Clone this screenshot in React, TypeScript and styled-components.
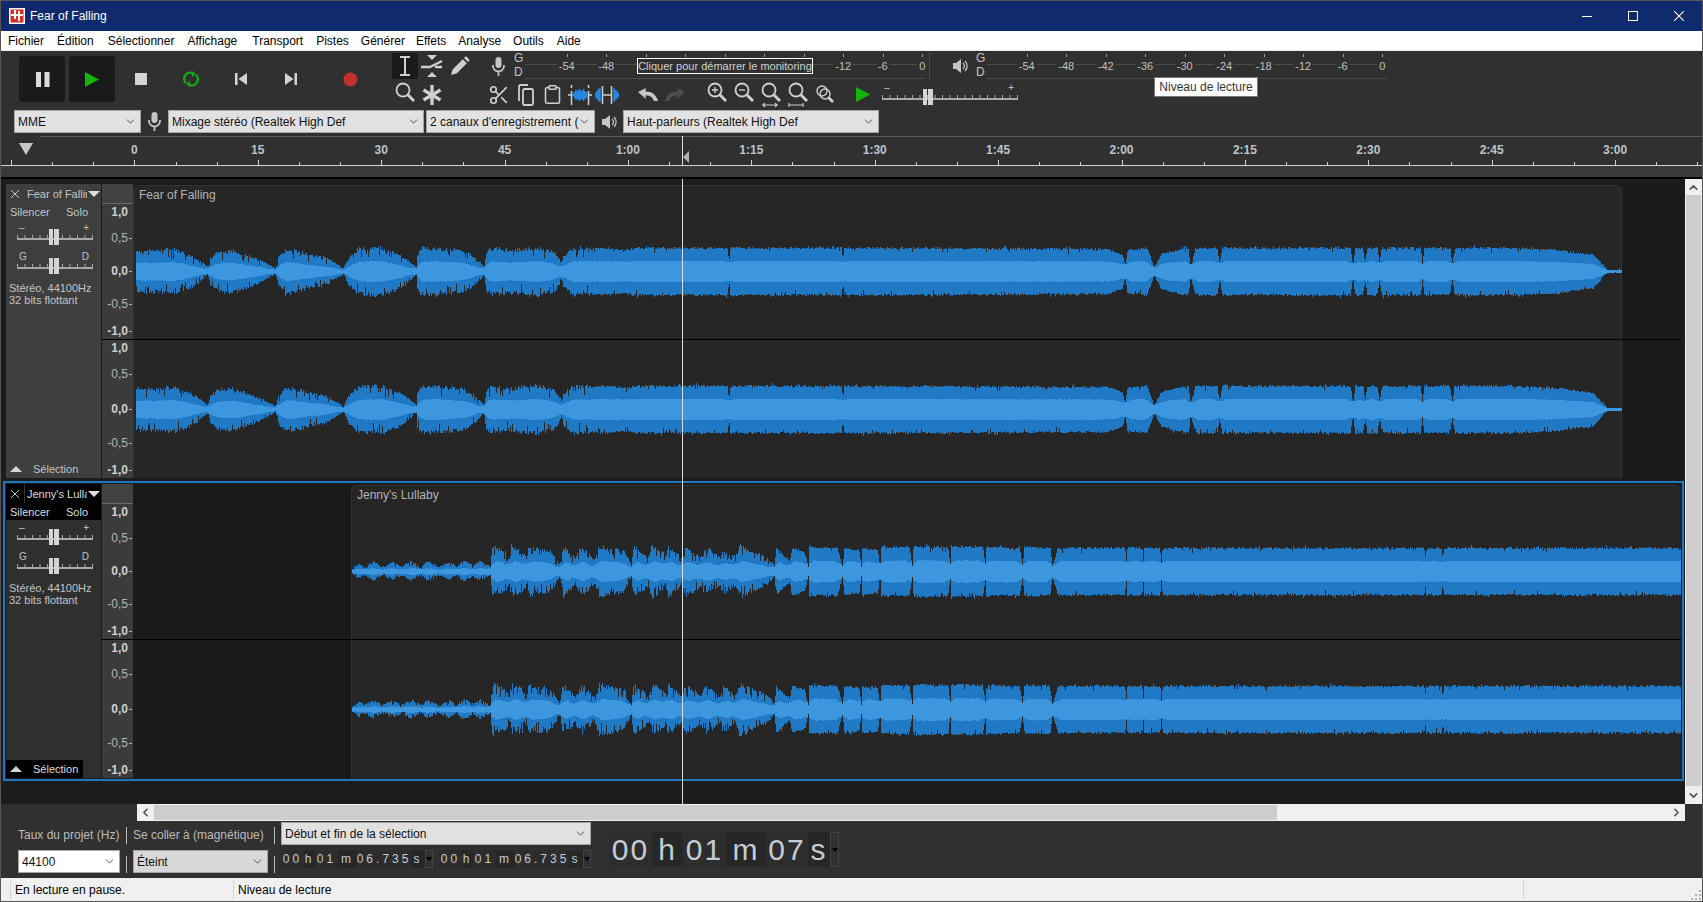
import { FC, ReactNode, useMemo } from "react";
import styled, { createGlobalStyle } from "styled-components";
import { ChevronDown, ChevronLeft, ChevronRight, ChevronUp, Clipboard, Scissors } from "lucide-react";

const GlobalStyle = createGlobalStyle`
  html, body {
    margin: 0;
    padding: 0;
    background: #303030;
    overflow: hidden;
  }
  * {
    box-sizing: border-box;
  }
`;

const ICON = "#cfcfcf";
const FONT = `"Liberation Sans", Arial, sans-serif`;

const Window = styled.div`
  width: 1703px;
  height: 902px;
  border: 1px solid #565656;
  display: flex;
  flex-direction: column;
  background: #303030;
  font-family: ${FONT};
  font-size: 12px;
  overflow: hidden;
`;

/* title + menu */
const TitleBar = styled.div`
  height: 30px;
  flex: none;
  background: #0f2b6e;
  color: #fff;
  display: flex;
  align-items: center;
  padding-left: 8px;
`;

const TitleText = styled.span`
  margin-left: 5px;
  font-size: 12px;
  flex: 1;
`;

const WindowButton = styled.div`
  width: 46px;
  height: 30px;
  display: flex;
  align-items: center;
  justify-content: center;
`;

const MenuBar = styled.div`
  height: 20px;
  flex: none;
  background: #fff;
  border-bottom: 1px solid #f0f0f0;
  display: flex;
  align-items: center;
  gap: 13px;
  padding-left: 7px;
  color: #000;
`;

const MenuItem = styled.span<{ $nudge?: number }>`
  margin-left: ${(p) => p.$nudge ?? 0}px;
`;

/* main toolbar */
const Toolbar = styled.div`
  height: 85px;
  flex: none;
  position: relative;
  background: #303030;
`;

const TopBlock = styled.div`
  height: 59px;
  display: flex;
`;

const Transport = styled.div`
  margin: 5px 0 0 18px;
  height: 46px;
  display: flex;
  align-items: center;
`;

const BigButton = styled.div<{ $gap?: number }>`
  width: 46px;
  height: 46px;
  margin-left: ${(p) => p.$gap ?? 0}px;
  background: #1a1a1a;
  border-radius: 3px;
  display: flex;
  align-items: center;
  justify-content: center;
`;

const TransportCell = styled.div<{ $gap?: number }>`
  width: 50px;
  height: 46px;
  margin-left: ${(p) => p.$gap ?? 0}px;
  display: flex;
  align-items: center;
  justify-content: center;
`;

const ToolGrid = styled.div`
  margin: 2px 0 0 17px;
  display: grid;
  grid-template-columns: 26px 28px 28px;
  grid-template-rows: 26px 29px;
  row-gap: 1px;
`;

const ToolCell = styled.div<{ $active?: boolean }>`
  display: flex;
  align-items: center;
  justify-content: center;
  border-radius: 3px;
  background: ${(p) => (p.$active ? "#1a1a1a" : "transparent")};
`;

const RightBlock = styled.div`
  margin: 2px 0 0 11px;
  display: flex;
  flex-direction: column;
  gap: 2px;
`;

const MeterRow = styled.div`
  display: flex;
  height: 26px;
`;

const IconCell = styled.div<{ $w?: number; $gap?: number }>`
  width: ${(p) => p.$w ?? 27}px;
  margin-left: ${(p) => p.$gap ?? 0}px;
  flex: none;
  display: flex;
  align-items: center;
  justify-content: center;
`;

const ChannelLetters = styled.div`
  width: 14px;
  margin-top: -2px;
  padding-left: 3px;
  line-height: 14px;
  color: #c4c4c4;
  font-size: 12px;
`;

const Meter = styled.div<{ $pad: number }>`
  position: relative;
  width: 400px;
  height: 26px;
  padding-left: ${(p) => p.$pad}px;
  display: flex;
  &::before,
  &::after {
    content: "";
    position: absolute;
    left: 0;
    right: 0;
    height: 1px;
    background: #4c4c4c;
  }
  &::before {
    top: 11px;
  }
  &::after {
    top: 25px;
  }
`;

const MeterCell = styled.div`
  position: relative;
  z-index: 1;
  flex: 0 0 39.5px;
  height: 23px;
  display: flex;
  align-items: center;
  justify-content: center;
  padding-top: 1px;
  &::before {
    content: "";
    position: absolute;
    top: 1px;
    left: 50%;
    width: 1px;
    height: 3px;
    background: #9a9a9a;
  }
`;

const MeterLabel = styled.span`
  margin-top: 2px;
  padding: 0 2px;
  background: #303030;
  color: #c0c0c0;
  font-size: 11px;
`;

const MeterHint = styled.div`
  position: absolute;
  z-index: 2;
  left: 112px;
  top: 5px;
  width: 176px;
  height: 16px;
  border: 1px solid #fff;
  background: #303030;
  color: #d0d0d0;
  font-size: 11px;
  line-height: 14px;
  text-align: center;
  white-space: nowrap;
`;

const Grip = styled.div`
  width: 1px;
  margin: 0 17px 0 4px;
  background: #4c4c4c;
`;

const EditRow = styled.div`
  display: flex;
  height: 27px;
`;

const Tooltip = styled.div`
  position: absolute;
  z-index: 6;
  left: 1153px;
  top: 26px;
  width: 104px;
  height: 20px;
  background: #fff;
  border: 1px solid #767676;
  color: #333;
  line-height: 18px;
  text-align: center;
`;

const DeviceRow = styled.div`
  height: 23px;
  display: flex;
  align-items: stretch;
  padding-left: 13px;
`;

const SelectBox = styled.div<{ $w: number; $bg?: string; $gap?: number }>`
  width: ${(p) => p.$w}px;
  margin-left: ${(p) => p.$gap ?? 0}px;
  flex: none;
  height: 23px;
  background: ${(p) => p.$bg ?? "#e1e1e1"};
  border: 1px solid #a4a4a4;
  color: #111;
  display: flex;
  align-items: center;
  justify-content: space-between;
  padding: 0 3px 0 3px;
  white-space: nowrap;
  overflow: hidden;
`;

const Select: FC<{ w: number; bg?: string; gap?: number; children: ReactNode }> = ({ w, bg, gap, children }) => (
  <SelectBox $w={w} $bg={bg} $gap={gap}>
    <span>{children}</span>
    <ChevronDown size={13} color="#333" strokeWidth={1.5} />
  </SelectBox>
);

/* timeline ruler */
const Ruler = styled.div`
  flex: none;
  position: relative;
  height: 30px;
  background: #303030;
  border-bottom: 1px solid #d4d4d4;
  &::before {
    content: "";
    position: absolute;
    top: 0;
    left: 39px;
    right: 0;
    height: 1px;
    background: #5a5a5a;
  }
`;

const RulerBand = styled.div`
  flex: none;
  height: 13px;
  background: #3a3a3a;
  border-bottom: 2px solid #000;
`;

const PinTriangle = styled.div`
  position: absolute;
  left: 18px;
  top: 7px;
  border-left: 7px solid transparent;
  border-right: 7px solid transparent;
  border-top: 12px solid #c8c8c8;
`;

const RulerTick = styled.div<{ $major: boolean }>`
  position: absolute;
  bottom: 0;
  width: 1px;
  height: ${(p) => (p.$major ? 5 : 3)}px;
  background: #d4d4d4;
`;

const RulerLabel = styled.div`
  position: absolute;
  top: 7px;
  transform: translateX(-50%);
  color: #bcc4cc;
  font-size: 12px;
  font-weight: 700;
`;

const RulerHead = styled.div`
  position: absolute;
  left: 681px;
  top: 0;
  bottom: 0;
  width: 1px;
  background: #dcdcdc;
  &::after {
    content: "";
    position: absolute;
    left: 1px;
    bottom: 2px;
    border-top: 6px solid transparent;
    border-bottom: 6px solid transparent;
    border-right: 6px solid #b0b0b0;
  }
`;

/* tracks */
const TracksRow = styled.div`
  height: 625px;
  flex: none;
  display: flex;
  position: relative;
`;

const TrackArea = styled.div`
  width: 1684px;
  padding: 2px 0 0 2px;
  background: #1c1c1c;
`;

const Playhead = styled.div`
  position: absolute;
  z-index: 5;
  left: 681px;
  top: 0;
  bottom: 0;
  width: 1px;
  background: #dcdcdc;
`;

const TrackBox = styled.div<{ $focused?: boolean }>`
  width: 1681px;
  height: 300px;
  padding: 1px;
  border: 2px solid ${(p) => (p.$focused ? "#1d78c1" : "transparent")};
  display: flex;
`;

const Panel = styled.div<{ $focused?: boolean }>`
  width: 95px;
  flex: none;
  background: ${(p) => (p.$focused ? "#2f2f2f" : "#3e3e3e")};
  color: #c4c4c4;
  font-size: 11px;
  display: flex;
  flex-direction: column;
`;

const PanelHead = styled.div<{ $focused?: boolean }>`
  background: ${(p) => (p.$focused ? "#000" : "transparent")};
  color: ${(p) => (p.$focused ? "#dedede" : "#c4c4c4")};
`;

const NameRow = styled.div`
  height: 19px;
  display: flex;
  align-items: center;
`;

const CloseBox = styled.div<{ $focused?: boolean }>`
  width: 19px;
  height: 19px;
  flex: none;
  display: flex;
  align-items: center;
  justify-content: center;
  border-right: 1px solid ${(p) => (p.$focused ? "#333" : "transparent")};
`;

const TrackName = styled.div`
  width: 62px;
  padding-left: 2px;
  white-space: nowrap;
  overflow: hidden;
`;

const MenuArrow = styled.div`
  margin-left: 1px;
  border-left: 6px solid transparent;
  border-right: 6px solid transparent;
  border-top: 6px solid #dedede;
`;

const MuteRow = styled.div`
  height: 17px;
  display: flex;
  align-items: center;
`;

const MuteLabel = styled.div<{ $w: number }>`
  width: ${(p) => p.$w}px;
  padding-left: 4px;
`;

const SliderWrap = styled.div<{ $w: number; $top: number; $left: number }>`
  width: ${(p) => p.$w}px;
  margin: ${(p) => p.$top}px 0 0 ${(p) => p.$left}px;
  flex: none;
`;

const SliderLabels = styled.div`
  height: 5px;
  padding: 0 4px 0 2px;
  display: flex;
  justify-content: space-between;
  font-size: 10px;
  line-height: 8px;
  color: #c0c0c0;
`;

const TrackInfo = styled.div`
  margin-top: 8px;
  padding-left: 3px;
  line-height: 12px;
  white-space: nowrap;
`;

const CollapseButton = styled.div<{ $focused?: boolean }>`
  margin-top: auto;
  width: 77px;
  height: 18px;
  flex: none;
  background: ${(p) => (p.$focused ? "#000" : "transparent")};
  color: ${(p) => (p.$focused ? "#dedede" : "#c4c4c4")};
  display: flex;
  align-items: center;
  padding-left: 4px;
  gap: 11px;
`;

const UpTriangle = styled.div`
  border-left: 6px solid transparent;
  border-right: 6px solid transparent;
  border-bottom: 6px solid #d4d4d4;
`;

const VRuler = styled.div`
  width: 31px;
  margin-left: 1px;
  flex: none;
  background: #3b3b3b;
  display: flex;
  flex-direction: column;
`;

const VRulerTop = styled.div`
  height: 20px;
  flex: none;
  background: #424242;
  border-bottom: 1px solid #6a6a6a;
`;

const VScale = styled.div<{ $h: number; $line?: boolean }>`
  position: relative;
  height: ${(p) => p.$h}px;
  flex: none;
  border-top: ${(p) => (p.$line ? "1px solid #000" : "none")};
`;

const VLabel = styled.div<{ $y: number; $strong?: boolean; $tick?: boolean }>`
  position: absolute;
  right: 5px;
  top: ${(p) => p.$y - 7}px;
  line-height: 14px;
  font-size: 12px;
  font-weight: ${(p) => (p.$strong ? 700 : 400)};
  color: ${(p) => (p.$strong ? "#d0d0d0" : "#b4b4b4")};
  &::after {
    content: "";
    display: ${(p) => (p.$tick ? "block" : "none")};
    position: absolute;
    top: 7px;
    right: -4px;
    width: 3px;
    height: 1px;
    background: #b4b4b4;
  }
`;

const Channels = styled.div`
  position: relative;
  flex: 1;
  background: #1a1a1a;
  overflow: hidden;
`;

const ClipFrame = styled.div<{ $left: number; $right: number }>`
  position: absolute;
  top: 1px;
  bottom: 0;
  left: ${(p) => p.$left}px;
  right: ${(p) => p.$right}px;
  background: #262626;
  border-top: 1px solid #333;
  border-left: 1px solid #333;
  border-right: ${(p) => (p.$right ? "1px solid #333" : "none")};
  border-radius: 6px 6px 0 0;
  color: #b4b4b4;
  padding: 2px 0 0 5px;
  line-height: 14px;
`;

const ChannelLine = styled.div`
  position: absolute;
  left: 0;
  right: 0;
  top: 155px;
  height: 1px;
  background: #000;
`;

const WaveSvg = styled.svg`
  position: absolute;
  left: 0;
  top: 0;
`;

/* scrollbars */
const VScroll = styled.div`
  width: 17px;
  background: #f0f0f0;
  display: flex;
  flex-direction: column;
`;

const ArrowBox = styled.div<{ $w: number; $h: number }>`
  width: ${(p) => p.$w}px;
  height: ${(p) => p.$h}px;
  flex: none;
  display: flex;
  align-items: center;
  justify-content: center;
`;

const VThumb = styled.div`
  flex: 1;
  margin-left: 1px;
  margin-right: 1px;
  background: #cdcdcd;
`;

const HScrollRow = styled.div`
  height: 17px;
  flex: none;
  display: flex;
  padding-left: 136px;
  background: #303030;
`;

const HScroll = styled.div`
  width: 1548px;
  background: #f0f0f0;
  display: flex;
`;

const HThumb = styled.div`
  width: 1123px;
  margin: 1px 0;
  background: #cdcdcd;
`;

const HRest = styled.div`
  flex: 1;
`;

/* selection toolbar */
const BottomBar = styled.div`
  height: 57px;
  flex: none;
  display: flex;
  padding-left: 17px;
  background: #303030;
`;

const LabelCol = styled.div<{ $w: number }>`
  width: ${(p) => p.$w}px;
  flex: none;
  padding-top: 7px;
  display: flex;
  flex-direction: column;
  gap: 8px;
`;

const BarLabel = styled.div`
  height: 14px;
  line-height: 14px;
  color: #bcbcbc;
  white-space: nowrap;
`;

const Sep = styled.div`
  width: 1px;
  margin: 0 6px;
  padding-top: 6px;
  display: flex;
  flex-direction: column;
  gap: 12px;
  flex: none;
`;

const SepLine = styled.div`
  width: 1px;
  height: 17px;
  background: #bcbcbc;
`;

const TimeCol = styled.div`
  width: 310px;
  flex: none;
  padding-top: 1px;
  display: flex;
  flex-direction: column;
  gap: 5px;
`;

const TimeRow = styled.div`
  display: flex;
  gap: 6px;
`;

const TimeBox = styled.div<{ $h: number; $size: number; $spacing: number }>`
  display: flex;
  height: ${(p) => p.$h}px;
  font-size: ${(p) => p.$size}px;
  letter-spacing: ${(p) => p.$spacing}px;
  color: #c4ccd4;
`;

const TimeCell = styled.div<{ $w: number; $dark?: boolean }>`
  width: ${(p) => p.$w}px;
  flex: none;
  background: ${(p) => (p.$dark ? "#272727" : "#2d2d2d")};
  display: flex;
  align-items: center;
  justify-content: center;
`;

const TimeArrow = styled.div<{ $w: number }>`
  width: ${(p) => p.$w}px;
  flex: none;
  border: 1px solid #444;
  display: flex;
  align-items: center;
  justify-content: center;
  &::after {
    content: "";
    border-left: 3px solid transparent;
    border-right: 3px solid transparent;
    border-top: 4px solid #000;
  }
`;

const BigTimeWrap = styled.div`
  margin: 11px 0 0 18px;
`;

/* status bar */
const StatusBar = styled.div`
  height: 23px;
  flex: none;
  position: relative;
  background: #f0f0f0;
  display: flex;
  color: #000;
  padding: 2px 0 1px 9px;
`;

const StatusCell = styled.div<{ $w?: number }>`
  width: ${(p) => (p.$w ? `${p.$w}px` : "auto")};
  flex: ${(p) => (p.$w ? "none" : 1)};
  border-left: 1px solid #d4d4d4;
  padding-left: 4px;
  line-height: 20px;
`;

const Gripper = styled.svg`
  position: absolute;
  right: 1px;
  bottom: 1px;
`;

/* icons, all hand drawn to follow the reference */
const Pause = () => (
  <svg width="14" height="16" viewBox="0 0 14 16" style={{ marginLeft: 1 }}>
    <rect x="0" y="1" width="5" height="15" fill="#dcdcdc" />
    <rect x="8.5" y="1" width="5" height="15" fill="#dcdcdc" />
  </svg>
);
const Play = ({ size = 14 }: { size?: number }) => (
  <svg width={size} height={size + 1} viewBox="0 0 14 15">
    <path d="M0 0L14 7.5L0 15z" fill="#14b40e" />
  </svg>
);
const Stop = () => (
  <svg width="12" height="12">
    <rect width="12" height="12" fill="#d4d4d4" />
  </svg>
);
const Loop = () => (
  <svg width="16" height="16" viewBox="0 0 16 16" fill="none">
    <path d="M3 12A6 6 0 0 1 10 2.4" stroke="#12a80e" strokeWidth="2.4" />
    <path d="M13 4A6 6 0 0 1 6 13.6" stroke="#12a80e" strokeWidth="2.4" />
    <path d="M9 0l4 3-4 3zM7 16l-4-3 4-3z" fill="#12a80e" />
  </svg>
);
const SkipStart = () => (
  <svg width="12" height="12">
    <rect width="2.5" height="12" fill="#d4d4d4" />
    <path d="M12 0V12L3.5 6z" fill="#d4d4d4" />
  </svg>
);
const SkipEnd = () => (
  <svg width="12" height="12">
    <path d="M0 0V12L8.5 6z" fill="#d4d4d4" />
    <rect x="9.5" width="2.5" height="12" fill="#d4d4d4" />
  </svg>
);
const Record = () => (
  <svg width="15" height="15">
    <circle cx="7.5" cy="7.5" r="7" fill="#c1302e" />
  </svg>
);
const IBeam = () => (
  <svg width="12" height="20" viewBox="0 0 12 20" fill="none" stroke={ICON} strokeWidth="2">
    <path d="M1 1h10M6 1v18M1 19h10" />
  </svg>
);
const EnvelopeTool = () => (
  <svg width="22" height="22" viewBox="0 0 22 22" fill={ICON}>
    <path d="M6 0h10l-5 5zM6 22h10l-5-5z" />
    <path d="M0 12h9l12-6M14 12h7" fill="none" stroke={ICON} strokeWidth="2.4" />
  </svg>
);
const Pencil = () => (
  <svg width="20" height="20" viewBox="0 0 20 20" fill={ICON}>
    <path d="M1 19l1.6-5.6L12.8 3.2l4 4L6.6 17.4zM14 2l1.2-1.2a1 1 0 0 1 1.4 0l2.6 2.6a1 1 0 0 1 0 1.4L18 6z" />
  </svg>
);
const Glass = ({ children, size = 20 }: { children?: ReactNode; size?: number }) => (
  <svg width={size} height={size + 6} viewBox="0 0 20 26" fill="none" stroke={ICON} strokeWidth="1.8">
    <circle cx="8" cy="8" r="6.5" />
    <path d="M12.8 12.8L19 19" strokeWidth="3" />
    {children}
  </svg>
);
const Star = () => (
  <svg width="20" height="20" viewBox="0 0 20 20" stroke={ICON} strokeWidth="3.4">
    <path d="M10 0v20M1.5 5l17 10M1.5 15l17-10" />
  </svg>
);
const Mic = () => (
  <svg width="13" height="19" viewBox="0 0 13 19" fill="none" stroke="#c4c4c4">
    <rect x="3.5" y="0" width="6" height="11" rx="3" fill="#c4c4c4" stroke="none" />
    <path d="M1 8v1a5.5 5.5 0 0 0 11 0V8M6.5 15v4" strokeWidth="1.8" />
  </svg>
);
const Speaker = () => (
  <svg width="15" height="16" viewBox="0 0 15 16" fill="none" stroke="#c4c4c4" strokeWidth="1.3">
    <path d="M0 5h3l5-4v14l-5-4H0z" fill="#c4c4c4" stroke="none" />
    <path d="M10 5a4 4 0 0 1 0 6M12 3a7 7 0 0 1 0 10" />
  </svg>
);
const CopyIcon = () => (
  <svg width="16" height="22" viewBox="0 0 16 22" fill="none" stroke={ICON} strokeWidth="1.8">
    <rect x="5" y="5" width="10" height="16" rx="1.5" />
    <path d="M1 17V2.5A1.5 1.5 0 0 1 2.500 1H10" />
  </svg>
);
const TrimIcon = () => (
  <svg width="24" height="20" viewBox="0 0 24 20" fill="none">
    <path
      d="M5 9v2M6.500 7v6M8 5v10M9.500 6v8M11 4v12M12.500 5v10M14 6v8M15.500 4v12M17 6v8M18.500 7v6"
      stroke="#2488e0"
      strokeWidth="1.600"
    />
    <path d="M3.500 0v3M3.500 6v14M20.500 0v3M20.500 6v14M0 10h3.500M20.500 10h3.500" stroke={ICON} strokeWidth="1.5" />
  </svg>
);
const SilenceIcon = () => (
  <svg width="24" height="20" viewBox="0 0 24 20" fill="none">
    <path d="M0.500 8v4M2 6v8M3.500 4v12M5 3v14M19 3v14M20.500 5v10M22 6v8M23.500 8v4" stroke="#2488e0" strokeWidth="1.600" />
    <path d="M7.500 1v18M16.500 1v18M7.500 10h9" stroke={ICON} strokeWidth="1.5" />
  </svg>
);
const UndoArrow = ({ color, flip }: { color: string; flip?: boolean }) => (
  <svg width="20" height="13" viewBox="0 0 20 13" style={flip ? { transform: "scaleX(-1)" } : undefined}>
    <path d="M0 4L8 0L7.400 3.500C13 3 18 6 20 13L16 13C14.500 8.500 11 7 7.500 7.500L8 11z" fill={color} />
  </svg>
);
const ZoomIn = () => (
  <Glass>
    <path d="M8 5v6M5 8h6" strokeWidth="1.3" />
  </Glass>
);
const ZoomOut = () => (
  <Glass>
    <path d="M5 8h6" strokeWidth="1.3" />
  </Glass>
);
const ZoomFit = () => (
  <Glass>
    <path d="M1 23h16M4 21l-2 2 2 2M14 21l2 2-2 2" strokeWidth="1.1" />
  </Glass>
);
const ZoomProject = () => (
  <Glass>
    <path d="M1 21v4M1 23h14M15 21v4" strokeWidth="1.1" />
  </Glass>
);
const ZoomToggle = () => (
  <svg width="18" height="20" viewBox="0 0 18 20" fill="none" stroke={ICON} strokeWidth="1.400">
    <circle cx="6" cy="6" r="5" />
    <circle cx="9" cy="9" r="5" />
    <path d="M12.500 12.500L17 17" strokeWidth="2.600" />
  </svg>
);

const ChromeClose = ({ size = 9, color = "#fff" }: { size?: number; color?: string }) => (
  <svg width={size} height={size} viewBox="0 0 10 10" stroke={color} strokeWidth="1.1">
    <path d="M0 0L10 10M10 0L0 10" />
  </svg>
);

const AppLogo = () => (
  <svg width="16" height="16" viewBox="0 0 16 16">
    <rect width="16" height="16" fill="#fff" />
    <rect x="1.500" y="1.500" width="13" height="13" fill="#d72c28" />
    <path d="M5 2v4H2v2h3v3h2V8h2v5h2V8h3V6h-3V3H9v3H7V2z" fill="#fff" />
  </svg>
);

const Slider: FC<{ width: number; thumb: number }> = ({ width, thumb }) => {
  const ticks = [];
  for (let x = 0; x <= width; x += 7.5) {
    ticks.push(<rect key={x} x={Math.min(x, width - 1)} y={6} width={1} height={3} fill="#a8a8a8" />);
  }
  return (
    <svg width={width} height={16} style={{ display: "block" }}>
      {ticks}
      <rect x={0} y={9} width={width} height={2} fill="#a8a8a8" />
      <rect x={thumb - 5} y={0} width={4} height={16} fill="#d4d4d4" />
      <rect x={thumb} y={0} width={5} height={16} fill="#d4d4d4" />
    </svg>
  );
};

/* waveform generation */
type Pt = [number, number];

const mulberry = (seed: number) => () => {
  seed |= 0;
  seed = (seed + 0x6d2b79f5) | 0;
  let t = Math.imul(seed ^ (seed >>> 15), 1 | seed);
  t = (t + Math.imul(t ^ (t >>> 7), 61 | t)) ^ t;
  return ((t ^ (t >>> 14)) >>> 0) / 4294967296;
};

const zoomPts = (origin: number, scale: number, pts: Pt[]): Pt[] => pts.map(([u, p]) => [origin + u / scale, p]);

const TRACK1: Pt[] = [
  ...zoomPts(130, 2.063, [
    [12, 19], [20, 20], [60, 20], [90, 22], [120, 15], [160, 2], [165, 10], [180, 18], [210, 20], [250, 12], [300, 1],
    [305, 10], [320, 22], [350, 18], [370, 14], [400, 11], [440, 1], [452, 12], [470, 22], [515, 24], [550, 16], [590, 2],
    [592, 15], [600, 23], [640, 23], [690, 19], [730, 2], [735, 20], [745, 23], [790, 20], [805, 22], [840, 24], [875, 18],
    [890, 5], [893, 12], [912, 23], [950, 23], [980, 24], [1030, 22], [1035, 24], [1232, 24], [1235, 10], [1238, 24],
    [1468, 24], [1470, 8], [1472, 24], [1550, 24],
  ]),
  ...zoomPts(880, 2.063, [
    [0, 24], [470, 23], [500, 17], [505, 6], [510, 22], [550, 24], [565, 4], [580, 18], [630, 24], [636, 24], [640, 5],
    [650, 24], [695, 24], [700, 8], [705, 24], [970, 24], [975, 5], [980, 24], [995, 24], [1000, 10], [1005, 24], [1025, 24],
    [1030, 8], [1035, 24], [1115, 24], [1118, 6], [1122, 24], [1175, 24], [1180, 8], [1185, 24], [1300, 24], [1400, 22],
    [1420, 20], [1470, 17], [1500, 1], [1530, 1],
  ]),
];

const TRACK2: Pt[] = [
  ...zoomPts(345, 2.306, [
    [16, 1], [30, 5], [45, 2], [65, 7], [85, 2], [110, 6], [130, 2], [150, 7], [175, 2], [190, 7], [215, 2], [240, 6],
    [258, 2], [270, 8], [295, 3], [310, 7], [335, 2], [339, 26], [370, 18], [378, 8], [382, 26], [410, 20], [418, 8],
    [422, 24], [470, 20], [495, 3], [502, 25], [530, 10], [545, 25], [575, 8], [585, 25], [640, 20], [660, 3], [665, 25],
    [700, 10], [705, 26], [740, 15], [745, 26], [775, 10], [785, 24], [820, 12], [830, 24], [865, 10], [870, 22], [900, 12],
    [910, 26], [975, 10], [990, 3], [993, 24], [1025, 10], [1030, 24], [1060, 20], [1068, 3], [1070, 25], [1135, 24],
    [1147, 3], [1150, 24], [1185, 22], [1190, 4], [1192, 24], [1228, 22], [1233, 3], [1236, 25], [1300, 25], [1308, 4],
    [1310, 26], [1390, 25], [1395, 4], [1396, 26], [1470, 25], [1477, 4], [1478, 25], [1555, 24], [1562, 4], [1565, 25],
  ]),
  ...zoomPts(1020, 2.34, [
    [5, 25], [70, 24], [75, 5], [88, 24], [245, 24], [248, 10], [250, 24], [285, 24], [288, 10], [290, 24], [327, 24],
    [330, 8], [333, 24], [945, 24], [947, 14], [950, 24], [985, 24], [988, 14], [992, 24], [1548, 24],
  ]),
];

const buildWave = (pts: Pt[], cy: number, seed: number, spikyUntil: number, notch: number) => {
  const rand = mulberry(seed);
  const x0 = Math.ceil(pts[0][0]);
  const x1 = Math.floor(pts[pts.length - 1][0]);
  const env: number[] = [];
  let seg = 0;
  for (let x = x0; x <= x1; x++) {
    while (seg < pts.length - 2 && pts[seg + 1][0] < x) seg++;
    const [ax, ap] = pts[seg];
    const [bx, bp] = pts[seg + 1];
    env.push(ap + ((bp - ap) * (x - ax)) / Math.max(bx - ax, 0.01));
  }
  const peakT: string[] = [];
  const peakB: string[] = [];
  const rmsT: string[] = [];
  const rmsB: string[] = [];
  env.forEach((p, i) => {
    const abs = x0 + i;
    const x = abs - 133;
    // notes hold their level and then drop away fast, with narrow spikes on the way
    const level = abs < spikyUntil ? 26 * Math.pow(p / 26, 0.72) : p;
    const jag = () => {
      let v = level * (1 - rand() * 0.09);
      if (abs < spikyUntil) {
        v = level * (0.84 + rand() * 0.2);
        if (rand() < notch) v = level * (0.5 + rand() * 0.3);
      } else {
        if (rand() < 0.06) v += rand() * 2.4;
        if (rand() < 0.07) v -= p * rand() * 0.18;
      }
      return Math.max(Math.min(v, 27), Math.min(p, 1));
    };
    const from = Math.max(i - 4, 0);
    const win = env.slice(from, i + 5);
    const avg = win.reduce((a, b) => a + b, 0) / win.length;
    const r = Math.min(avg * 0.4 + rand() * 0.8, p);
    const top = jag();
    const bot = jag() + (p > 8 ? 1 : 0);
    peakT.push(`L${x} ${(cy - top).toFixed(1)}L${x + 1} ${(cy - top).toFixed(1)}`);
    peakB.unshift(`L${x + 1} ${(cy + bot).toFixed(1)}L${x} ${(cy + bot).toFixed(1)}`);
    rmsT.push(`L${x} ${(cy - r).toFixed(1)}L${x + 1} ${(cy - r).toFixed(1)}`);
    rmsB.unshift(`L${x + 1} ${(cy + r + 1).toFixed(1)}L${x} ${(cy + r + 1).toFixed(1)}`);
  });
  const start = x0 - 133;
  return {
    peak: `M${start} ${cy}${peakT.join("")}${peakB.join("")}Z`,
    rms: `M${start} ${cy}${rmsT.join("")}${rmsB.join("")}Z`,
  };
};

const Wave: FC<{ pts: Pt[]; seed: number; spikyUntil: number; notch: number }> = ({ pts, seed, spikyUntil, notch }) => {
  const channels = useMemo(
    () => [buildWave(pts, 87, seed, spikyUntil, notch), buildWave(pts, 225, seed + 7, spikyUntil, notch)],
    [pts, seed, spikyUntil, notch]
  );
  return (
    <WaveSvg width={1548} height={294} shapeRendering="crispEdges">
      {channels.map((c, i) => (
        <g key={i}>
          <path d={c.peak} fill="#2079c4" />
          <path d={c.rms} fill="#3c97df" />
        </g>
      ))}
    </WaveSvg>
  );
};

const SCALE_1 = [8, 34, 67, 100, 127];
const SCALE_2 = [8, 34, 69, 103, 130];
const SCALE_TEXT = ["1,0", "0,5", "0,0", "-0,5", "-1,0"];

const Scale: FC<{ ys: number[]; h: number; line?: boolean }> = ({ ys, h, line }) => (
  <VScale $h={h} $line={line}>
    {ys.map((y, i) => (
      <VLabel key={y} $y={y} $strong={i % 2 === 0} $tick={i !== 0}>
        {SCALE_TEXT[i]}
      </VLabel>
    ))}
  </VScale>
);

type TrackProps = {
  name: string;
  focused?: boolean;
  clipLeft: number;
  clipRight: number;
  pts: Pt[];
  seed: number;
  spikyUntil: number;
  notch: number;
};

const Track: FC<TrackProps> = ({ name, focused, clipLeft, clipRight, pts, seed, spikyUntil, notch }) => (
  <TrackBox $focused={focused}>
    <Panel $focused={focused}>
      <PanelHead $focused={focused}>
        <NameRow>
          <CloseBox $focused={focused}>
            <ChromeClose size={8} color="#dedede" />
          </CloseBox>
          <TrackName>{name}</TrackName>
          <MenuArrow />
        </NameRow>
        <MuteRow>
          <MuteLabel $w={60}>Silencer</MuteLabel>
          <span>Solo</span>
        </MuteRow>
      </PanelHead>
      <SliderWrap $w={76} $top={4} $left={11}>
        <SliderLabels>
          <span>–</span>
          <span>+</span>
        </SliderLabels>
        <Slider width={76} thumb={37} />
      </SliderWrap>
      <SliderWrap $w={76} $top={8} $left={11}>
        <SliderLabels>
          <span>G</span>
          <span>D</span>
        </SliderLabels>
        <Slider width={76} thumb={37} />
      </SliderWrap>
      <TrackInfo>
        Stéréo, 44100Hz
        <br />
        32 bits flottant
      </TrackInfo>
      <CollapseButton $focused={focused}>
        <UpTriangle />
        <span>Sélection</span>
      </CollapseButton>
    </Panel>
    <VRuler>
      <VRulerTop />
      <Scale ys={SCALE_1} h={135} />
      <Scale ys={SCALE_2} h={139} line />
    </VRuler>
    <Channels>
      <ClipFrame $left={clipLeft} $right={clipRight}>
        {name}
      </ClipFrame>
      <Wave pts={pts} seed={seed} spikyUntil={spikyUntil} notch={notch} />
      <ChannelLine />
    </Channels>
  </TrackBox>
);

const METER_LABELS = ["-54", "-48", "-42", "-36", "-30", "-24", "-18", "-12", "-6", "0"];

/* the labels that sit under the monitoring hint are covered in the app too */
const COVERED = ["-42", "-36", "-30", "-24", "-18"];

const LevelMeter: FC<{ hint?: string; pad: number }> = ({ hint, pad }) => (
  <Meter $pad={pad}>
    {METER_LABELS.map((l) => (
      <MeterCell key={l}>{!(hint && COVERED.includes(l)) && <MeterLabel>{l}</MeterLabel>}</MeterCell>
    ))}
    {hint && <MeterHint>{hint}</MeterHint>}
  </Meter>
);

const SMALL_TIME: [string, number, boolean][] = [
  ["00", 23, false],
  ["h", 11, true],
  ["01", 23, false],
  ["m", 19, true],
  ["06.735", 54, false],
  ["s", 14, true],
];
const BIG_TIME: [string, number, boolean][] = [
  ["00", 43, false],
  ["h", 31, true],
  ["01", 43, false],
  ["m", 40, true],
  ["07", 42, false],
  ["s", 22, true],
];

const Clock: FC<{ cells: [string, number, boolean][]; h: number; size: number; spacing: number; arrow: number }> = ({
  cells,
  h,
  size,
  spacing,
  arrow,
}) => (
  <TimeBox $h={h} $size={size} $spacing={spacing}>
    {cells.map(([t, w, dark], i) => (
      <TimeCell key={i} $w={w} $dark={dark}>
        {t}
      </TimeCell>
    ))}
    <TimeArrow $w={arrow} />
  </TimeBox>
);

const MENU: [string, number][] = [
  ["Fichier", 0],
  ["Édition", 0],
  ["Sélectionner", 1],
  ["Affichage", 0],
  ["Transport", 2],
  ["Pistes", 0],
  ["Générer", -1],
  ["Effets", -2],
  ["Analyse", -1],
  ["Outils", -1],
  ["Aide", 0],
];

const App = () => {
  const ticks = [];
  for (let i = -3; i <= 38; i++) {
    ticks.push(<RulerTick key={i} $major={i % 3 === 0} style={{ left: 133.4 + i * 41.13 }} />);
  }
  const labels = ["0", "15", "30", "45", "1:00", "1:15", "1:30", "1:45", "2:00", "2:15", "2:30", "2:45", "3:00"];

  return (
    <Window>
      <GlobalStyle />
      <TitleBar>
        <AppLogo />
        <TitleText>Fear of Falling</TitleText>
        <WindowButton>
          <svg width="10" height="1">
            <rect width="10" height="1" fill="#fff" />
          </svg>
        </WindowButton>
        <WindowButton>
          <svg width="10" height="10">
            <rect x="0.5" y="0.5" width="9" height="9" fill="none" stroke="#fff" />
          </svg>
        </WindowButton>
        <WindowButton>
          <ChromeClose size={10} />
        </WindowButton>
      </TitleBar>

      <MenuBar>
        {MENU.map(([m, nudge]) => (
          <MenuItem key={m} $nudge={nudge}>
            {m}
          </MenuItem>
        ))}
      </MenuBar>

      <Toolbar>
        <TopBlock>
          <Transport>
            <BigButton>
              <Pause />
            </BigButton>
            <BigButton $gap={4}>
              <Play />
            </BigButton>
            <TransportCell $gap={1}>
              <Stop />
            </TransportCell>
            <TransportCell>
              <Loop />
            </TransportCell>
            <TransportCell>
              <SkipStart />
            </TransportCell>
            <TransportCell>
              <SkipEnd />
            </TransportCell>
            <TransportCell $gap={9}>
              <Record />
            </TransportCell>
          </Transport>

          <ToolGrid>
            <ToolCell $active>
              <IBeam />
            </ToolCell>
            <ToolCell>
              <EnvelopeTool />
            </ToolCell>
            <ToolCell>
              <Pencil />
            </ToolCell>
            <ToolCell>
              <Glass />
            </ToolCell>
            <ToolCell>
              <Star />
            </ToolCell>
          </ToolGrid>

          <RightBlock>
            <MeterRow>
              <IconCell $w={26}>
                <Mic />
              </IconCell>
              <ChannelLetters>
                G
                <br />D
              </ChannelLetters>
              <LevelMeter hint="Cliquer pour démarrer le monitoring" pad={22} />
              <Grip />
              <IconCell $w={26}>
                <Speaker />
              </IconCell>
              <ChannelLetters>
                G
                <br />D
              </ChannelLetters>
              <LevelMeter pad={20} />
            </MeterRow>
            <EditRow>
              <IconCell>
                <Scissors size={22} color={ICON} strokeWidth={1.8} />
              </IconCell>
              <IconCell>
                <CopyIcon />
              </IconCell>
              <IconCell>
                <Clipboard size={21} color={ICON} strokeWidth={1.8} />
              </IconCell>
              <IconCell>
                <TrimIcon />
              </IconCell>
              <IconCell>
                <SilenceIcon />
              </IconCell>
              <IconCell $gap={14}>
                <UndoArrow color="#c8c8c8" />
              </IconCell>
              <IconCell>
                <UndoArrow color="#4f4f4f" flip />
              </IconCell>
              <IconCell $gap={15}>
                <ZoomIn />
              </IconCell>
              <IconCell>
                <ZoomOut />
              </IconCell>
              <IconCell>
                <ZoomFit />
              </IconCell>
              <IconCell>
                <ZoomProject />
              </IconCell>
              <IconCell>
                <ZoomToggle />
              </IconCell>
              <IconCell $w={28} $gap={11}>
                <Play />
              </IconCell>
              <SliderWrap $w={136} $top={3} $left={5}>
                <SliderLabels>
                  <span>–</span>
                  <span>+</span>
                </SliderLabels>
                <Slider width={136} thumb={46} />
              </SliderWrap>
            </EditRow>
          </RightBlock>
        </TopBlock>

        <DeviceRow>
          <Select w={127}>MME</Select>
          <IconCell $w={27}>
            <Mic />
          </IconCell>
          <Select w={256}>Mixage stéréo (Realtek High Def</Select>
          <Select w={169} gap={2}>
            2 canaux d'enregistrement (
          </Select>
          <IconCell $w={28}>
            <Speaker />
          </IconCell>
          <Select w={256}>Haut-parleurs (Realtek High Def</Select>
        </DeviceRow>
        <Tooltip>Niveau de lecture</Tooltip>
      </Toolbar>

      <Ruler>
        <PinTriangle />
        {ticks}
        {labels.map((l, i) => (
          <RulerLabel key={l} style={{ left: 133.4 + i * 123.39 }}>
            {l}
          </RulerLabel>
        ))}
        <RulerHead />
      </Ruler>
      <RulerBand />

      <TracksRow>
        <TrackArea>
          <Track name="Fear of Falling" clipLeft={0} clipRight={59} pts={TRACK1} seed={11} spikyUntil={590} notch={0.12} />
          <Track name="Jenny's Lullaby" focused clipLeft={218} clipRight={0} pts={TRACK2} seed={29} spikyUntil={775} notch={0.25} />
        </TrackArea>
        <Playhead />
        <VScroll>
          <ArrowBox $w={17} $h={16}>
            <ChevronUp size={13} color="#555" strokeWidth={3} />
          </ArrowBox>
          <VThumb />
          <ArrowBox $w={17} $h={18}>
            <ChevronDown size={13} color="#555" strokeWidth={3} />
          </ArrowBox>
        </VScroll>
      </TracksRow>

      <HScrollRow>
        <HScroll>
          <ArrowBox $w={17} $h={17}>
            <ChevronLeft size={13} color="#555" strokeWidth={3} />
          </ArrowBox>
          <HThumb />
          <HRest />
          <ArrowBox $w={17} $h={17}>
            <ChevronRight size={13} color="#555" strokeWidth={3} />
          </ArrowBox>
        </HScroll>
      </HScrollRow>

      <BottomBar>
        <LabelCol $w={102}>
          <BarLabel>Taux du projet (Hz)</BarLabel>
          <Select w={102} bg="#fff">
            44100
          </Select>
        </LabelCol>
        <Sep>
          <SepLine />
          <SepLine />
        </Sep>
        <LabelCol $w={135}>
          <BarLabel>Se coller à (magnétique)</BarLabel>
          <Select w={135} bg="#d8d8d8">
            Éteint
          </Select>
        </LabelCol>
        <Sep>
          <SepLine />
          <SepLine />
        </Sep>
        <TimeCol>
          <Select w={310}>Début et fin de la sélection</Select>
          <TimeRow>
            <Clock cells={SMALL_TIME} h={18} size={12} spacing={3} arrow={8} />
            <Clock cells={SMALL_TIME} h={18} size={12} spacing={3} arrow={8} />
          </TimeRow>
        </TimeCol>
        <BigTimeWrap>
          <Clock cells={BIG_TIME} h={35} size={30} spacing={2} arrow={9} />
        </BigTimeWrap>
      </BottomBar>

      <StatusBar>
        <StatusCell $w={223}>En lecture en pause.</StatusCell>
        <StatusCell $w={1290}>Niveau de lecture</StatusCell>
        <StatusCell />
        <Gripper width="10" height="10" fill="#b4b4b4">
          <rect x="8" y="0" width="2" height="2" />
          <rect x="4" y="4" width="2" height="2" />
          <rect x="8" y="4" width="2" height="2" />
          <rect x="0" y="8" width="2" height="2" />
          <rect x="4" y="8" width="2" height="2" />
          <rect x="8" y="8" width="2" height="2" />
        </Gripper>
      </StatusBar>
    </Window>
  );
};

export default App;
